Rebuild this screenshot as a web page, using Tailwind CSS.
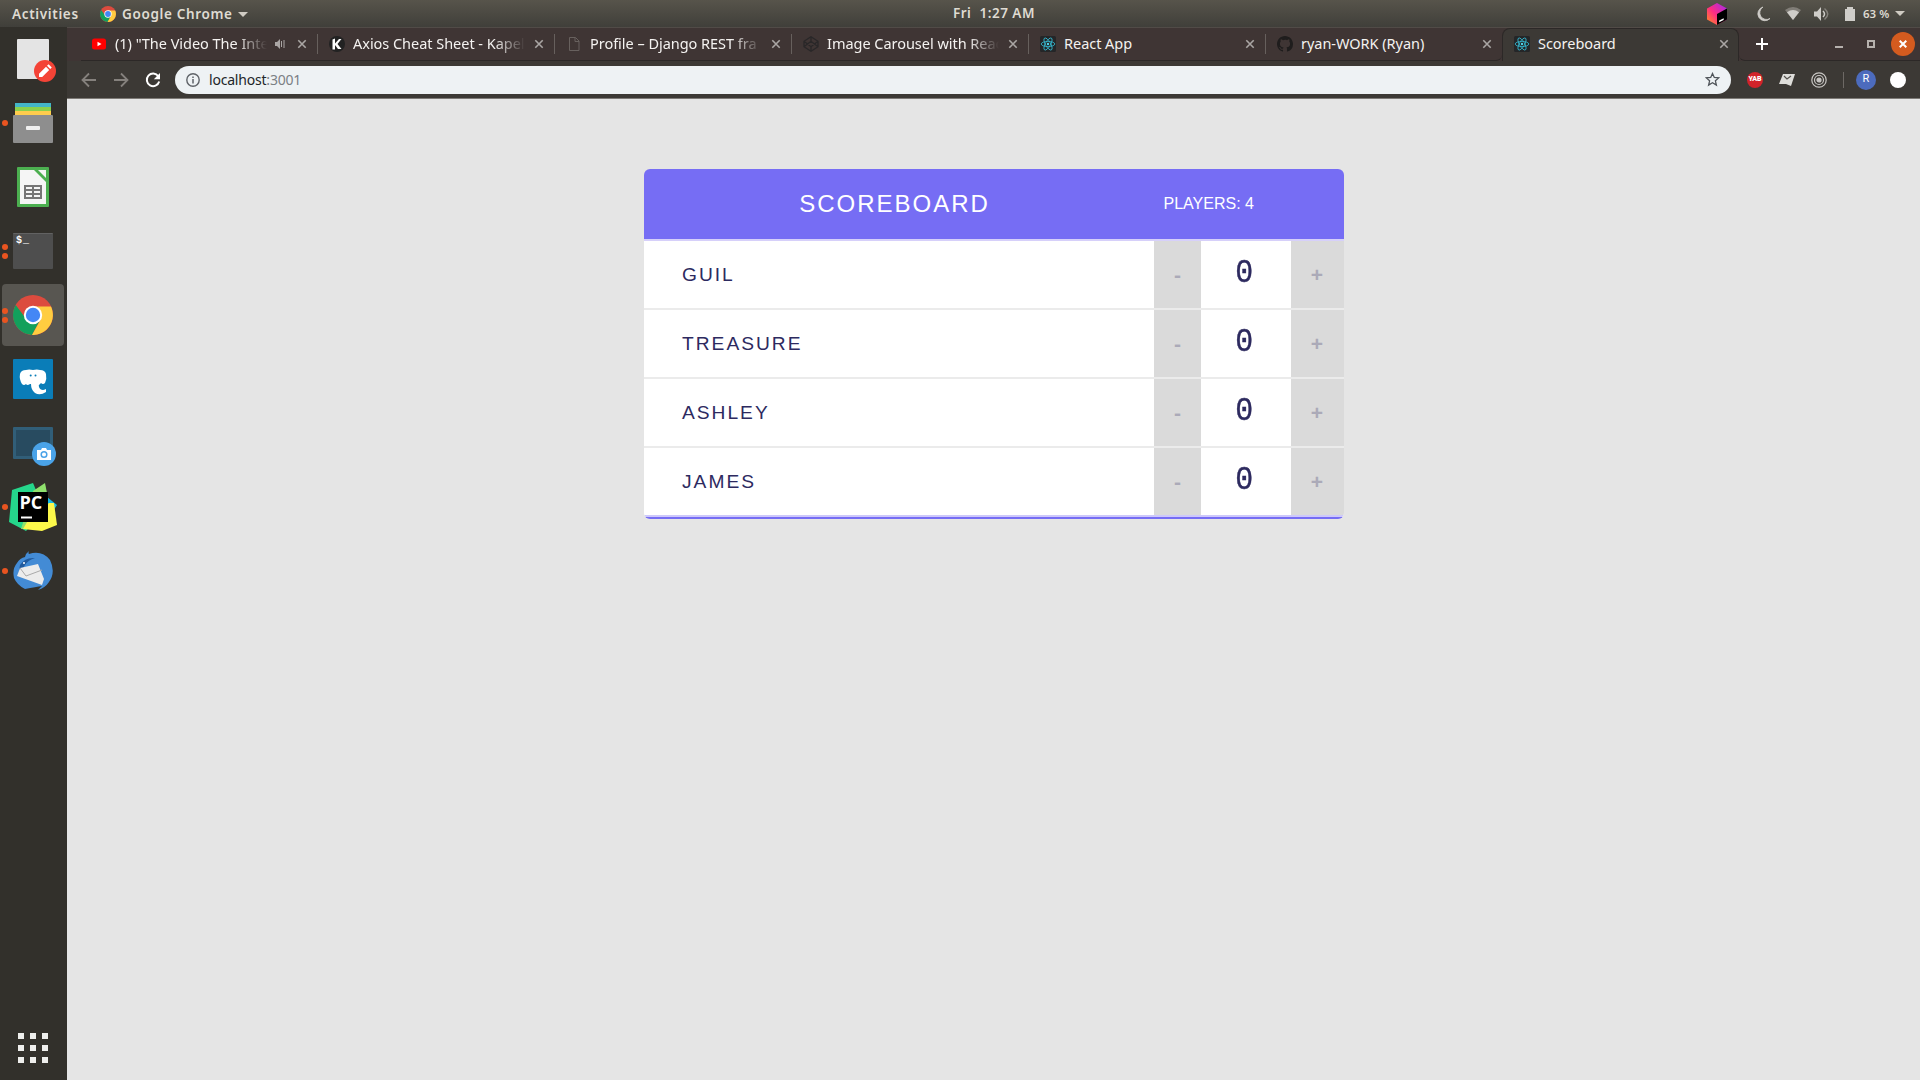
<!DOCTYPE html>
<html lang="en">
<head>
<meta charset="utf-8">
<title>Scoreboard</title>
<script src="https://cdn.jsdelivr.net/npm/@tailwindcss/browser@4"></script>
</head>
<body class="w-[1920px] h-[1080px] overflow-hidden flex flex-col bg-[#e5e5e5] font-['Noto_Sans',sans-serif]">
<svg class="hidden">
  <symbol id="chrome" viewBox="0 0 40 40">
    <circle cx="20" cy="20" r="20" fill="#dc4b3e"/>
    <path d="M2.7 10A20 20 0 0 0 19 40L27 25 20 20 11 21Z" fill="#12a05c"/>
    <path d="M38 11.500H20L28 24 19 40A20 20 0 0 0 38 11.500Z" fill="#ffcd40"/>
    <circle cx="20" cy="20" r="9.200" fill="#fff"/><circle cx="20" cy="20" r="7.200" fill="#4487f5"/>
  </symbol>
  <symbol id="react" viewBox="0 0 16 16">
    <rect width="16" height="16" rx="1.500" fill="#242628"/>
    <g fill="none" stroke="#35b5cc" stroke-width=".85"><ellipse cx="8" cy="8" rx="6.800" ry="2.600"/><ellipse cx="8" cy="8" rx="6.800" ry="2.600" transform="rotate(60 8 8)"/><ellipse cx="8" cy="8" rx="6.800" ry="2.600" transform="rotate(120 8 8)"/></g>
    <circle cx="8" cy="8" r="1.200" fill="#4fd4ea"/>
  </symbol>
  <symbol id="close" viewBox="0 0 10 10"><path d="M1.300 1.300 8.700 8.700M8.700 1.300 1.300 8.700" stroke="#aaa6a4" stroke-width="1.600"/></symbol>
</svg>

<header class="h-[27px] shrink-0 flex items-center bg-gradient-to-b from-[#57544b] to-[#403f3a] text-[#dfdbd2] text-[13.5px] font-semibold">
  <div class="w-[953px] flex items-center pl-3 pt-px">
    <span class="w-[88px] tracking-[0.65px]">Activities</span>
    <svg class="size-4 -mt-px"><use href="#chrome"/></svg>
    <span class="ml-1.5 w-[112px] whitespace-nowrap tracking-[0.65px]">Google Chrome</span>
    <svg class="ml-1 w-2.5 h-[5px]" viewBox="0 0 10 5"><path d="M0 0h10L5 5Z" fill="#cfcbc3"/></svg>
  </div>
  <div class="w-[84px] whitespace-pre tracking-[0.5px]">Fri  1:27 AM</div>
  <div class="flex-1 flex items-center justify-end pr-[15px]">
    <svg class="w-5 h-[22px] mr-[30px]" viewBox="0 0 20 22"><defs><linearGradient id="jb" x1="0" y1="1" x2="1" y2="0"><stop offset="0" stop-color="#ff9419"/><stop offset=".45" stop-color="#ff2d82"/><stop offset="1" stop-color="#9b28f5"/></linearGradient></defs><path d="M10 0l10 5.500v11L10 22 0 16.500V5.500Z" fill="url(#jb)"/><path d="M10 11l10-5.500v11L10 22Z" fill="#000"/><path d="M12.200 17.500l4.500-2.300v1.800l-4.500 2.300Z" fill="#fff"/></svg>
    <svg class="w-3.5 h-4 mr-[14px]" viewBox="0 0 14 16"><path d="M6 1A7 7 0 1 0 13 12.500 6.500 6.500 0 0 1 6 1Z" fill="#cfcdc9" stroke="#cfcdc9" stroke-width=".8"/></svg>
    <svg class="w-4 h-[13px] mr-[13px]" viewBox="0 0 16 13"><path d="M8 13L0 3Q8-3 16 3Z" fill="#807d77"/><path d="M8 13L2 5.200Q8 1 14 5.200Z" fill="#cfcdc9"/></svg>
    <svg class="w-4 h-[14px] mr-[15px]" viewBox="0 0 16 14"><path d="M0 4.500h3L7 0v14L3 9.500H0Z" fill="#cfcdc9"/><path d="M9 4q3 3 0 6" stroke="#cfcdc9" stroke-width="1.500" fill="none"/><path d="M10.500 1.500q6.500 5.500 0 11" stroke="#85827c" stroke-width="1.500" fill="none"/></svg>
    <svg class="w-2.5 h-3.5 mr-2" viewBox="0 0 10 14"><path d="M0 2h2V0h6v2h2v12H0Z" fill="#cfcdc9"/></svg>
    <span class="text-[11.5px] w-[32px] whitespace-nowrap">63 %</span>
    <svg class="w-2.5 h-[5px]" viewBox="0 0 10 5"><path d="M0 0h10L5 5Z" fill="#cfcbc3"/></svg>
  </div>
</header>

<div class="flex flex-1 min-h-0">
  <aside class="w-[67px] shrink-0 bg-[#32302b] flex flex-col">
    <div class="h-16 pl-[13px] pt-3"><svg class="w-11 h-11" viewBox="0 0 44 44"><rect x="4" width="32" height="40" rx="1" fill="#e4e4e4"/><circle cx="32" cy="32" r="11" fill="#f44336"/><path d="M26 38v-3.200l7-7 3.200 3.200-7 7ZM34 26.800l1.600-1.600 3.200 3.200-1.600 1.600Z" fill="#fff"/></svg></div>
    <div class="h-16 flex items-center"><i class="size-1.5 ml-0.5 rounded-full bg-[#e95420]"></i><svg class="ml-[5px] size-10" viewBox="0 0 40 40"><path fill="#43b5c8" d="M2 0h36v5H2z"/><path fill="#8bd04c" d="M2 4h36v5H2z"/><path fill="#ffcc4d" d="M2 8h36v5H2z"/><rect y="12" width="40" height="28" rx="1" fill="#8e8e8e"/><rect x="13" y="23" width="14" height="4" rx="1" fill="#efefef"/></svg></div>
    <div class="h-16 flex items-center pl-[17px]"><svg class="w-8 h-10" viewBox="0 0 32 40"><rect width="32" height="40" rx="1" fill="#4caf50"/><path d="M3 3h14l12 12v22H3Z" fill="#f5f5f5"/><path d="M21 3h8v8Z" fill="#f5f5f5"/><path d="M7 18h18v14H7Z" fill="#757575"/><path d="M9 20h6v2H9zM17 20h6v2h-6zM9 24h6v2H9zM17 24h6v2h-6zM9 28h6v2H9zM17 28h6v2h-6z" fill="#f5f5f5"/></svg></div>
    <div class="h-16 flex items-center"><div class="ml-0.5 flex flex-col gap-[3px]"><i class="size-1.5 rounded-full bg-[#e95420]"></i><i class="size-1.5 rounded-full bg-[#e95420]"></i></div><div class="ml-[5px] w-10 h-9 rounded-[1px] border-t border-[#626262] bg-[#4e4e4e] text-white font-['Liberation_Mono',monospace] font-bold text-[10px] leading-3 pl-[3px] pt-px tracking-[1px]">$_</div></div>
    <div class="h-16 flex items-center pl-0.5"><div class="w-[62px] h-[62px] rounded bg-[#585651] flex items-center"><div class="flex flex-col gap-[3px]"><i class="size-1.5 rounded-full bg-[#e95420]"></i><i class="size-1.5 rounded-full bg-[#e95420]"></i></div><svg class="ml-[5px] size-10"><use href="#chrome"/></svg></div></div>
    <div class="h-16 flex items-center pl-[13px]"><svg class="size-10" viewBox="0 0 40 40"><rect width="40" height="40" rx="1" fill="#0a7db8"/><path d="M7 15q1-4 6-4 3-1 7 0 4-1 7 0 5 0 6 4 1 5-1 9-2 2-4 0l-1 1q-2 1-1 3 1 3 4 3 1 0 3-1v3q-6 4-11 1-4-3-4-9h-1q-1 1-3 1l-1-1q-2 2-4 0-3-5-2-10Z" fill="#fff"/><circle cx="17.700" cy="16.500" r="1" fill="#0a7db8"/><circle cx="22.500" cy="16.500" r="1" fill="#0a7db8"/></svg></div>
    <div class="h-16 flex items-center pl-[13px]"><svg class="w-11 h-10 overflow-visible" viewBox="0 0 44 40"><rect y="4" width="40" height="32" rx="1" fill="#315e78"/><path d="M3 7h34v26H3z" fill="#284b60"/><circle cx="31" cy="31" r="12" fill="#4aa3e8"/><path d="M24 27h4l1-2h4l1 2h4v10H24Z" fill="#fff"/><circle cx="31" cy="31.500" r="2.800" fill="none" stroke="#4aa3e8" stroke-width="1.500"/></svg></div>
    <div class="h-16 flex items-center"><i class="size-1.5 ml-0.5 rounded-full bg-[#e95420]"></i><svg class="ml-px size-12" viewBox="0 0 48 48"><path d="M3 7l21-7 12 28-19 20-17-9Z" fill="#25d68b"/><path d="M24 8l12-8 4 20-20 26-8 0Z" fill="#8fe06c"/><path d="M38 14l10 8-9 14Z" fill="#15b9e8"/><path d="M40 20h5l3 22-15 6-19-2 7-12Z" fill="#fcf84a"/><path d="M9 9h30v30H9z"/><path d="M12 33.500h11v2H12z" fill="#fff"/><text x="10.500" y="25.500" fill="#fff" font-family="Open Sans,sans-serif" font-weight="700" font-size="18">PC</text></svg></div>
    <div class="h-16 flex items-center"><i class="size-1.5 ml-0.5 rounded-full bg-[#e95420]"></i><svg class="ml-[5px] size-10" viewBox="0 0 40 40"><path d="M12 6Q13 2 16 0q-1 2 0 3Q29-1 37 9q6 12-1 22-4 6-11 8l4-4Q23 36 12 38 4 34 1 27q-2-9 3-15Q7 7 12 6Z" fill="#438bd5"/><path d="M7 14Q12 6 22 7 15 9 12 14l-7 11Z" fill="#225a9c"/><path d="M7 17l18-4 6 15-2 6-25-9Z" fill="#ececec"/><path d="M7 17l6 8 16-6" fill="none" stroke="#aaa" stroke-width="1"/><circle cx="11" cy="12" r="1" fill="#fff"/></svg></div>
    <div class="mt-auto mb-[17px] ml-[18px] grid grid-cols-3 gap-1.5 w-[30px]">
      <i class="size-1.5 bg-[#eeeeec]"></i><i class="size-1.5 bg-[#eeeeec]"></i><i class="size-1.5 bg-[#eeeeec]"></i><i class="size-1.5 bg-[#eeeeec]"></i><i class="size-1.5 bg-[#eeeeec]"></i><i class="size-1.5 bg-[#eeeeec]"></i><i class="size-1.5 bg-[#eeeeec]"></i><i class="size-1.5 bg-[#eeeeec]"></i><i class="size-1.5 bg-[#eeeeec]"></i>
    </div>
  </aside>

  <div class="flex-1 min-w-0 flex flex-col">
    <nav class="h-[34px] shrink-0 bg-[#3f3534] border-t border-[#514b47] flex text-[14.5px] tracking-[-0.03px] text-[#f4f2f0] pl-[14px]">
      <div class="w-[237px] h-[33px] flex items-center pl-2.5 pb-px border-b border-[#2c2827]">
        <svg class="size-4 shrink-0" viewBox="0 0 16 16"><rect x="1" y="2.500" width="14" height="11" rx="2.500" fill="#f00"/><path d="M6.500 5.700v4.600L10.500 8Z" fill="#fff"/></svg>
        <span class="ml-2 w-[152px] overflow-hidden whitespace-nowrap [mask-image:linear-gradient(to_right,#000_80%,transparent)]">(1) "The Video The Inte</span>
        <svg class="ml-2 w-2.5 h-2.5 shrink-0" viewBox="0 0 10 10"><path d="M0 3h2L5 0v10L2 7H0Z" fill="#aaa6a4"/><path d="M6.500 2v6M9 1v8" stroke="#aaa6a4" stroke-width="1"/></svg>
        <svg class="ml-3 size-2.5 shrink-0"><use href="#close"/></svg>
        <i class="ml-auto w-px h-5 bg-[#67605d]"></i>
      </div>
      <div class="w-[237px] h-[33px] flex items-center pl-[11px] pb-px border-b border-[#2c2827]">
        <svg class="size-4 shrink-0" viewBox="0 0 16 16"><circle cx="8" cy="8" r="8" fill="#222"/><path d="M3.500 3.500l2.500-1v5l4-4.500h2.500L8.500 8l4 5H9L6 9v4.500H3.500Z" fill="#fff"/></svg>
        <span class="ml-2 w-[172px] overflow-hidden whitespace-nowrap [mask-image:linear-gradient(to_right,#000_82%,transparent)]">Axios Cheat Sheet - Kapeli</span>
        <svg class="ml-[9px] size-2.5 shrink-0"><use href="#close"/></svg>
        <i class="ml-auto w-px h-5 bg-[#67605d]"></i>
      </div>
      <div class="w-[237px] h-[33px] flex items-center pl-[11px] pb-px border-b border-[#2c2827]">
        <svg class="size-4 shrink-0" viewBox="0 0 16 16"><path d="M3.500 1.500h6l3.500 3.500v9.500H3.500ZM9 1.500V5.500h4" fill="none" stroke="#68615e" stroke-width="1"/></svg>
        <span class="ml-2 w-[172px] overflow-hidden whitespace-nowrap [mask-image:linear-gradient(to_right,#000_82%,transparent)]">Profile – Django REST fra</span>
        <svg class="ml-[9px] size-2.5 shrink-0"><use href="#close"/></svg>
        <i class="ml-auto w-px h-5 bg-[#67605d]"></i>
      </div>
      <div class="w-[237px] h-[33px] flex items-center pl-[11px] pb-px border-b border-[#2c2827]">
        <svg class="size-4 shrink-0" viewBox="0 0 16 16" fill="none" stroke="#292728" stroke-width="1.300"><path d="M8 .7l7 4.600v5.400l-7 4.600-7-4.600V5.300ZM8 .7v4.600M8 15.300v-4.600M1 5.300l7 5.400 7-5.400M1 10.700l7-5.400 7 5.400"/></svg>
        <span class="ml-2 w-[172px] overflow-hidden whitespace-nowrap [mask-image:linear-gradient(to_right,#000_82%,transparent)]">Image Carousel with Reac</span>
        <svg class="ml-[9px] size-2.5 shrink-0"><use href="#close"/></svg>
        <i class="ml-auto w-px h-5 bg-[#67605d]"></i>
      </div>
      <div class="w-[237px] h-[33px] flex items-center pl-[11px] pb-px border-b border-[#2c2827]">
        <svg class="size-4 shrink-0"><use href="#react"/></svg>
        <span class="ml-2 w-[172px] whitespace-nowrap">React App</span>
        <svg class="ml-[9px] size-2.5 shrink-0"><use href="#close"/></svg>
        <i class="ml-auto w-px h-5 bg-[#67605d]"></i>
      </div>
      <div class="w-[236px] h-[33px] flex items-center pl-[11px] pb-px border-b border-[#2c2827] rounded-br-md">
        <svg class="size-4 shrink-0" viewBox="0 0 16 16"><path d="M8 0C3.580 0 0 3.580 0 8c0 3.540 2.290 6.530 5.470 7.590.4.070.55-.17.55-.38 0-.19-.01-.82-.01-1.490-2.010.37-2.530-.49-2.690-.94-.09-.23-.48-.94-.82-1.130-.28-.15-.68-.52-.01-.53.63-.01 1.080.58 1.230.82.72 1.210 1.870.87 2.330.66.07-.52.28-.87.51-1.070-1.780-.2-3.640-.89-3.640-3.950 0-.87.31-1.590.82-2.150-.08-.2-.36-1.020.08-2.120 0 0 .67-.21 2.200.82A7.600 7.600 0 0 1 8 3.860c.68 0 1.360.09 2 .27 1.530-1.040 2.200-.82 2.200-.82.44 1.100.16 1.920.08 2.120.51.56.82 1.270.82 2.150 0 3.070-1.870 3.750-3.650 3.950.29.25.54.73.54 1.480 0 1.070-.01 1.930-.01 2.200 0 .21.15.46.55.38A8.010 8.010 0 0 0 16 8c0-4.420-3.580-8-8-8Z" fill="#1f1d1d"/></svg>
        <span class="ml-2 w-[172px] whitespace-nowrap">ryan-WORK (Ryan)</span>
        <svg class="ml-[9px] size-2.5 shrink-0"><use href="#close"/></svg>
      </div>
      <div class="w-[237px] h-[34px] flex items-center pl-[11px] pb-[3px] bg-[#3c3935] border-x border-t border-[#2c2827] rounded-t-lg">
        <svg class="size-4 shrink-0"><use href="#react"/></svg>
        <span class="ml-2 w-[172px] whitespace-nowrap">Scoreboard</span>
        <svg class="ml-[9px] size-2.5 shrink-0"><use href="#close"/></svg>
      </div>
      <div class="flex-1 h-[33px] flex items-center pl-[17px] pb-px border-b border-[#2c2827] rounded-bl-md">
        <svg class="size-3" viewBox="0 0 12 12"><path d="M6 0v12M0 6h12" stroke="#fff" stroke-width="2"/></svg>
        <svg class="ml-[67px] w-2 h-2" viewBox="0 0 8 8"><path d="M0 7h8" stroke="#b6b1ad" stroke-width="2"/></svg>
        <i class="ml-6 size-2 border-2 border-[#b6b1ad]"></i>
        <div class="ml-4 size-6 shrink-0 rounded-full bg-[#d45b1f] flex items-center justify-center"><svg class="size-2" viewBox="0 0 8 8"><path d="M.7.7l6.600 6.600M7.300.7L.7 7.300" stroke="#fff" stroke-width="2"/></svg></div>
      </div>
    </nav>

    <div class="h-[38px] shrink-0 bg-[#3c3935] border-b border-[#7d7a76] flex items-center pl-[14px]">
      <svg class="size-4" viewBox="0 0 16 16" fill="none" stroke="#85817d" stroke-width="1.800"><path d="M15 8H2M8 1.500L1.500 8 8 14.500"/></svg>
      <svg class="ml-4 size-4" viewBox="0 0 16 16" fill="none" stroke="#85817d" stroke-width="1.800"><path d="M1 8h13M8 1.500L14.500 8 8 14.500"/></svg>
      <svg class="ml-4 size-4" viewBox="0 0 16 16"><path d="M13.300 4.200A6.300 6.300 0 1 0 14.200 9.500" fill="none" stroke="#fff" stroke-width="2"/><path d="M15 1v6.200H8.800Z" fill="#fff"/></svg>
      <div class="ml-[14px] w-[1556px] h-7 rounded-full bg-[#eef2f4] flex items-center pl-[11px] pr-[11px]">
        <svg class="size-3.5" viewBox="0 0 14 14"><circle cx="7" cy="7" r="6.200" fill="none" stroke="#5f6368" stroke-width="1.400"/><path d="M7 6v4.500M7 3.500v1.500" stroke="#5f6368" stroke-width="1.500"/></svg>
        <span class="ml-[9px] text-[14px] tracking-[-0.2px] text-[#222629]">localhost<span class="text-[#7b8084]">:3001</span></span>
        <svg class="ml-auto size-[15px]" viewBox="0 0 15 15"><path d="M7.500 1.500l1.800 4 4.400.4-3.300 2.900 1 4.300-3.900-2.300-3.900 2.300 1-4.300L1.300 5.900l4.400-.4Z" fill="none" stroke="#4f5459" stroke-width="1.300"/></svg>
      </div>
      <div class="ml-4 size-4 rounded-full bg-[#d2232a] text-white text-[7px] font-black flex items-center justify-center font-['Roboto',sans-serif]">YAB</div>
      <svg class="ml-4 w-4 h-3" viewBox="0 0 16 12"><path d="M4 0h12l-4 12-5-2H0Z" fill="#deddda"/><path d="M5 2l3 3 4-3" fill="none" stroke="#55524e" stroke-width="1.200"/></svg>
      <svg class="ml-4 size-4" viewBox="0 0 16 16" fill="none" stroke="#c9c7c4" stroke-width="1.200"><circle cx="8" cy="8" r="7.200"/><circle cx="8" cy="8" r="4.500"/><circle cx="8" cy="8" r="2" fill="#c9c7c4"/></svg>
      <i class="ml-4 w-px h-4 bg-[#6d6965]"></i>
      <div class="ml-3 size-5 rounded-full bg-[#4c6bbd] text-white text-[11px] flex items-center justify-center font-['Roboto',sans-serif]">R</div>
      <i class="ml-[14px] size-4 rounded-full bg-white"></i>
    </div>

    <main class="flex-1 pl-[577px] pt-[70px] font-['Liberation_Sans',Arial,sans-serif] text-[#2d2a5f]">
      <section class="w-[700px] rounded-md overflow-hidden">
        <div class="h-[72px] bg-[#766df4] border-b-2 border-[#d6d0fa] text-white flex items-center">
          <h1 class="w-[501px] text-center text-[24px] tracking-[2px]">SCOREBOARD</h1>
          <p class="pl-[18.5px] text-base">PLAYERS: 4</p>
        </div>
        <div class="h-[69px] flex border-b-2 border-[#ebebeb] bg-white"><div class="flex-1 flex items-center pl-[38px] pt-0.5 text-[19.200px] tracking-[2px]">GUIL</div><div class="w-[47px] bg-[#dadada] text-[#abaab8] text-[21px] font-bold flex items-center justify-center">-</div><div class="w-[90px] pr-[3px] text-[34px] leading-[65px] text-center font-['Liberation_Mono',monospace]"><span class="inline-block scale-x-88 [-webkit-text-stroke:0.4px]">0</span></div><div class="w-[53px] bg-[#dadada] text-[#abaab8] text-[21px] font-bold flex items-center justify-center pr-px">+</div></div>
        <div class="h-[69px] flex border-b-2 border-[#ebebeb] bg-white"><div class="flex-1 flex items-center pl-[38px] pt-0.5 text-[19.200px] tracking-[2px]">TREASURE</div><div class="w-[47px] bg-[#dadada] text-[#abaab8] text-[21px] font-bold flex items-center justify-center">-</div><div class="w-[90px] pr-[3px] text-[34px] leading-[65px] text-center font-['Liberation_Mono',monospace]"><span class="inline-block scale-x-88 [-webkit-text-stroke:0.4px]">0</span></div><div class="w-[53px] bg-[#dadada] text-[#abaab8] text-[21px] font-bold flex items-center justify-center pr-px">+</div></div>
        <div class="h-[69px] flex border-b-2 border-[#ebebeb] bg-white"><div class="flex-1 flex items-center pl-[38px] pt-0.5 text-[19.200px] tracking-[2px]">ASHLEY</div><div class="w-[47px] bg-[#dadada] text-[#abaab8] text-[21px] font-bold flex items-center justify-center">-</div><div class="w-[90px] pr-[3px] text-[34px] leading-[65px] text-center font-['Liberation_Mono',monospace]"><span class="inline-block scale-x-88 [-webkit-text-stroke:0.4px]">0</span></div><div class="w-[53px] bg-[#dadada] text-[#abaab8] text-[21px] font-bold flex items-center justify-center pr-px">+</div></div>
        <div class="h-[69px] flex border-b-2 border-[#cdc8fb] bg-white"><div class="flex-1 flex items-center pl-[38px] pt-0.5 text-[19.200px] tracking-[2px]">JAMES</div><div class="w-[47px] bg-[#dadada] text-[#abaab8] text-[21px] font-bold flex items-center justify-center">-</div><div class="w-[90px] pr-[3px] text-[34px] leading-[65px] text-center font-['Liberation_Mono',monospace]"><span class="inline-block scale-x-88 [-webkit-text-stroke:0.4px]">0</span></div><div class="w-[53px] bg-[#dadada] text-[#abaab8] text-[21px] font-bold flex items-center justify-center pr-px">+</div></div>
        <div class="h-0.5 bg-[#766df4]"></div>
      </section>
    </main>
  </div>
</div>
</body>
</html>
